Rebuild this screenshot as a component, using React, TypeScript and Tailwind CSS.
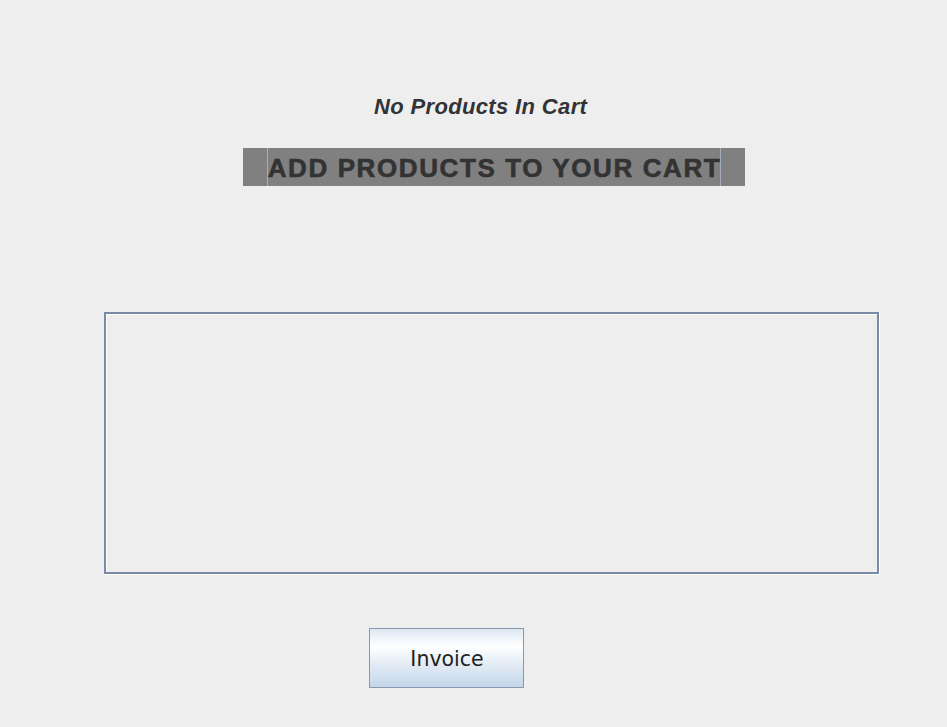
import React from "react";

export default function App() {
  return (
    <div className="w-[947px] h-[727px] bg-[#eeeeee] overflow-hidden flex flex-col items-start">
      <div
        className="mt-[94px] ml-[374px] text-[22px] leading-[25px] font-bold italic text-[#333333] tracking-[0.35px] whitespace-nowrap"
        style={{ fontFamily: '"Liberation Sans", Arial, sans-serif' }}
      >
        No Products In Cart
      </div>
      <div className="mt-[29px] ml-[243px] w-[502px] h-[38px] bg-[#808080] flex items-stretch">
        <div className="ml-[24px] w-[454px] border-l border-r border-[#a4adbb] flex items-center justify-center">
          <span
            className="text-[26px] leading-[38px] pt-[1px] pl-[1px] font-bold text-[#333333] tracking-[1.6px] whitespace-nowrap [-webkit-text-stroke:0.6px_#333333]"
            style={{ fontFamily: '"Liberation Sans", Arial, sans-serif' }}
          >
            ADD PRODUCTS TO YOUR CART
          </span>
        </div>
      </div>
      <div className="mt-[126px] ml-[104px] w-[776px] h-[263px] border-r border-b border-white">
        <div className="w-full h-full border-2 border-[#7b8aa6]">
          <div className="w-full h-full border-t border-l border-white bg-[#eeeeee]" />
        </div>
      </div>
      <button
        className="mt-[53px] ml-[369px] w-[155px] h-[60px] pt-[3px] pl-[1px] border border-[#8799b0] bg-[linear-gradient(to_bottom,#dde7f2_0%,#ffffff_30%,#e4ecf5_60%,#c3d6ea_100%)] flex items-center justify-center text-[20.5px] text-[#222222]"
        style={{ fontFamily: '"DejaVu Sans", Verdana, sans-serif' }}
      >
        Invoice
      </button>
    </div>
  );
}
